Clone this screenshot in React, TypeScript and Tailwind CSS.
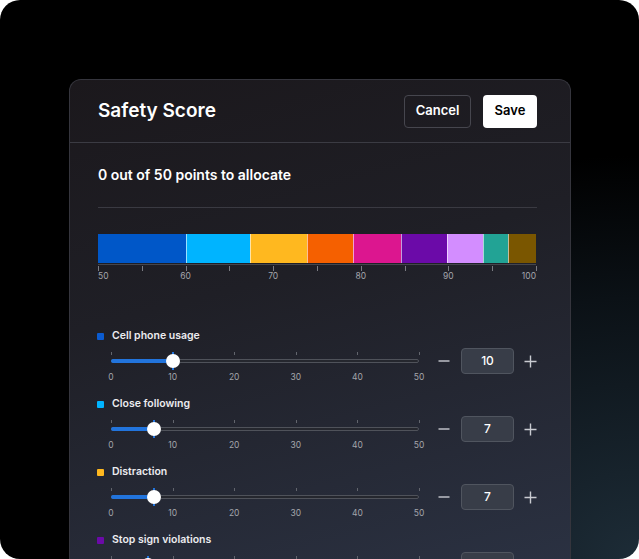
const segments = [
  { color: 'bg-[#0057c8]', width: 'w-[88px]' },
  { color: 'bg-[#00b4ff]', width: 'w-[64px]' },
  { color: 'bg-[#ffb81f]', width: 'w-[57px]' },
  { color: 'bg-[#f56000]', width: 'w-[46px]' },
  { color: 'bg-[#dc168f]', width: 'w-[48px]' },
  { color: 'bg-[#6b0aa8]', width: 'w-[46px]' },
  { color: 'bg-[#d38dff]', width: 'w-[36px]' },
  { color: 'bg-[#22a395]', width: 'w-[25px]' },
  { color: 'bg-[#7a5600]', width: 'w-[28px]' },
]

const rows = [
  { label: 'Cell phone usage', dot: 'bg-[#0b5bd0]', value: 10 },
  { label: 'Close following', dot: 'bg-[#00b4ff]', value: 7 },
  { label: 'Distraction', dot: 'bg-[#ffb81f]', value: 7 },
  { label: 'Stop sign violations', dot: 'bg-[#6b0aa8]', value: 6 },
]

const axisLabels = ['50', '60', '70', '80', '90', '100']
const sliderTicks = [0, 10, 20, 30, 40, 50]

function Slider({ value }: { value: number }) {
  const pct = (value / 50) * 100
  return (
    <div className="relative h-[26px] w-[308px]">
      {sliderTicks.map((t) => (
        <div key={t} className="absolute top-[4px] h-[3px] w-px bg-[#62656d]" style={{ left: `${t * 2}%` }} />
      ))}
      <div className="absolute left-0 right-0 top-[11px] h-[4px] rounded-full border border-[#4f525a] bg-[#25272e]" />
      <div className="absolute left-0 top-[11px] h-[4px] rounded-l-full bg-[#2274dc]" style={{ width: `${pct}%` }} />
      <div className="absolute top-[4px] h-[18px] w-[2px] -translate-x-1/2 bg-[#2274dc]" style={{ left: `${pct}%` }} />
      <div className="absolute top-[6px] h-[14px] w-[14px] -translate-x-1/2 rounded-full bg-white" style={{ left: `${pct}%` }} />
      {sliderTicks.map((t) => (
        <span
          key={t}
          className="absolute top-[25px] -translate-x-1/2 text-[8.5px] leading-[8px] text-[#a3a5ab]"
          style={{ left: `${t * 2}%` }}
        >
          {t}
        </span>
      ))}
    </div>
  )
}

function Minus() {
  return (
    <svg width="12" height="12" viewBox="0 0 12 12" className="text-[#c9cbd1]">
      <path d="M0.5 6h11" stroke="currentColor" strokeWidth="1.4" />
    </svg>
  )
}

function Plus() {
  return (
    <svg width="13" height="13" viewBox="0 0 13 13" className="text-[#c9cbd1]">
      <path d="M0.5 6.5h12M6.5 0.5v12" stroke="currentColor" strokeWidth="1.4" />
    </svg>
  )
}

export default function App() {
  return (
    <div className="h-[559px] w-[639px] bg-white font-['Inter',sans-serif]">
      <div className="h-full w-full overflow-hidden rounded-[20px] bg-[radial-gradient(ellipse_90%_85%_at_100%_100%,#1d2c37_0%,#0b1116_55%,#000000_85%)] pl-[69px] pt-[79px]">
        <div className="h-[500px] w-[502px] rounded-t-[12px] border border-b-0 border-[#35353d] bg-[linear-gradient(165deg,#1b181c_0%,#1f1f26_40%,#2b3243_100%)]">
          <div className="flex h-[63px] items-center justify-between border-b border-[#3b3b43] pl-[28px] pr-[33px]">
            <h1 className="pt-px text-[19px] font-semibold text-white">Safety Score</h1>
            <div className="flex items-center gap-[12px]">
              <button className="h-[33px] w-[67px] rounded-[4px] border border-[#46464e] text-[13px] font-semibold text-white">
                Cancel
              </button>
              <button className="h-[33px] w-[54px] rounded-[4px] bg-white text-[13px] font-semibold text-black">
                Save
              </button>
            </div>
          </div>

          <div className="pl-[28px] pr-[33px] pt-[22px]">
            <p className="text-[14px] font-semibold leading-[20px] text-white">0 out of 50 points to allocate</p>
            <div className="mt-[22px] h-px bg-[#3a3a42]" />

            <div className="mt-[26px] w-[438px]">
              <div className="flex h-[29px]">
                {segments.map((s, i) => (
                  <div key={i} className={`${s.color} ${s.width} h-full ${i > 0 ? 'border-l border-white/60' : ''}`} />
                ))}
              </div>
              <div className="relative h-[19px]">
                <div className="absolute left-0 right-0 top-[1px] h-px bg-[#45464d]" />
                {Array.from({ length: 11 }).map((_, i) => (
                  <div key={i} className="absolute top-[3px] h-[5px] w-px bg-[#7a7b82]" style={{ left: `${i * 10}%` }} />
                ))}
                {axisLabels.map((l, i) => (
                  <span
                    key={l}
                    className={`absolute top-[9px] text-[8.5px] leading-[8px] text-[#a3a5ab] ${
                      i === 0 ? '' : i === axisLabels.length - 1 ? '-translate-x-full' : '-translate-x-1/2'
                    }`}
                    style={{ left: `${i * 20}%` }}
                  >
                    {l}
                  </span>
                ))}
              </div>
            </div>

            <div className="mt-[46px] flex flex-col gap-[22px]">
              {rows.map((r) => (
                <div key={r.label}>
                  <div className="-ml-px flex h-[16px] items-center gap-[8px]">
                    <span className={`h-[7px] w-[7px] rounded-[1px] ${r.dot}`} />
                    <span className="text-[10.5px] font-semibold text-[#ececef]">{r.label}</span>
                  </div>
                  <div className="mt-[4px] flex items-center">
                    <div className="ml-[13px]">
                      <Slider value={r.value} />
                    </div>
                    <div className="ml-[19px] flex items-center">
                      <Minus />
                      <div className="ml-[11px] flex h-[26px] w-[53px] items-center justify-center rounded-[4px] border border-[#50555f] bg-[#383d48] text-[12px] font-medium text-white">
                        {r.value}
                      </div>
                      <div className="ml-[10px]">
                        <Plus />
                      </div>
                    </div>
                  </div>
                </div>
              ))}
            </div>
          </div>
        </div>
      </div>
    </div>
  )
}
